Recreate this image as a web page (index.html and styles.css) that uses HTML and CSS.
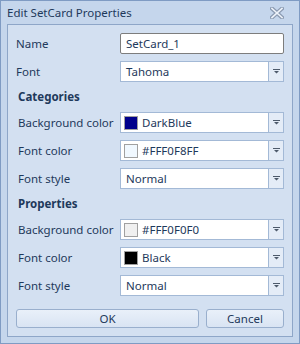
FILE: index.html
```html
<!DOCTYPE html>
<html lang="en">
<head>
    <meta charset="UTF-8">
    <title>Edit SetCard Properties</title>
    <link rel="stylesheet" href="styles.css">
</head>
<body>
    <div class="window">
        <div class="titlebar">
            <span class="title">Edit SetCard Properties</span>
            <svg class="close" width="14" height="12" viewBox="0 0 14 12">
                <path d="M2 1.5 L12 10.5 M12 1.5 L2 10.5" stroke="#8b9bb2" stroke-width="4" stroke-linecap="square"/>
                <path d="M2 1.5 L12 10.5 M12 1.5 L2 10.5" stroke="#eef3fa" stroke-width="1.6" stroke-linecap="square"/>
            </svg>
        </div>
        <div class="panel">
            <div class="row">
                <label>Name</label>
                <div class="edit focused">SetCard_1</div>
            </div>
            <div class="row">
                <label>Font</label>
                <div class="combo">
                    <span class="value">Tahoma</span>
                    <span class="drop"><svg width="7" height="5" viewBox="0 0 7 5"><path d="M0 0h7v1H0z M1 2h5L3.5 4.5z" fill="#4d5a6b"/></svg></span>
                </div>
            </div>

            <div class="heading">Categories</div>
            <div class="row sub">
                <label>Background color</label>
                <div class="combo">
                    <span class="value"><i class="swatch" style="background:#00008b"></i>DarkBlue</span>
                    <span class="drop"><svg width="7" height="5" viewBox="0 0 7 5"><path d="M0 0h7v1H0z M1 2h5L3.5 4.5z" fill="#4d5a6b"/></svg></span>
                </div>
            </div>
            <div class="row sub">
                <label>Font color</label>
                <div class="combo">
                    <span class="value"><i class="swatch" style="background:#f0f8ff"></i>#FFF0F8FF</span>
                    <span class="drop"><svg width="7" height="5" viewBox="0 0 7 5"><path d="M0 0h7v1H0z M1 2h5L3.5 4.5z" fill="#4d5a6b"/></svg></span>
                </div>
            </div>
            <div class="row sub">
                <label>Font style</label>
                <div class="combo">
                    <span class="value">Normal</span>
                    <span class="drop"><svg width="7" height="5" viewBox="0 0 7 5"><path d="M0 0h7v1H0z M1 2h5L3.5 4.5z" fill="#4d5a6b"/></svg></span>
                </div>
            </div>

            <div class="heading">Properties</div>
            <div class="row sub">
                <label>Background color</label>
                <div class="combo">
                    <span class="value"><i class="swatch" style="background:#f0f0f0"></i>#FFF0F0F0</span>
                    <span class="drop"><svg width="7" height="5" viewBox="0 0 7 5"><path d="M0 0h7v1H0z M1 2h5L3.5 4.5z" fill="#4d5a6b"/></svg></span>
                </div>
            </div>
            <div class="row sub">
                <label>Font color</label>
                <div class="combo">
                    <span class="value"><i class="swatch" style="background:#000000"></i>Black</span>
                    <span class="drop"><svg width="7" height="5" viewBox="0 0 7 5"><path d="M0 0h7v1H0z M1 2h5L3.5 4.5z" fill="#4d5a6b"/></svg></span>
                </div>
            </div>
            <div class="row sub">
                <label>Font style</label>
                <div class="combo">
                    <span class="value">Normal</span>
                    <span class="drop"><svg width="7" height="5" viewBox="0 0 7 5"><path d="M0 0h7v1H0z M1 2h5L3.5 4.5z" fill="#4d5a6b"/></svg></span>
                </div>
            </div>

            <div class="buttons">
                <button class="btn ok">OK</button>
                <button class="btn cancel">Cancel</button>
            </div>
        </div>
    </div>
</body>
</html>
```

FILE: styles.css
```css
body {
    margin: 0;
    font-family: 'Noto Sans', 'Open Sans', sans-serif;
    font-size: 11.5px;
    color: #1e395b;
}
.window {
    width: 300px;
    height: 344px;
    box-sizing: border-box;
    border: 1px solid #7f9bc3;
    background-color: #c5d6ec;
    display: flex;
    flex-direction: column;
}
.titlebar {
    height: 23px;
    display: flex;
    align-items: center;
    justify-content: space-between;
    padding: 0 15px 0 6px;
}
.title {
    font-size: 11.5px;
    color: #1e395b;
}
.close {
    display: block;
    margin-top: 1px;
}
.panel {
    margin: 0 6px 0 6px;
    height: 313px;
    box-sizing: border-box;
    border: 1px solid #8ea6c8;
    background-color: #d3e0f1;
    padding: 8px 8px 8px 8px;
    display: flex;
    flex-direction: column;
    gap: 7px;
}
.row {
    display: grid;
    grid-template-columns: 104px 1fr;
    align-items: center;
    height: 21px;
}
.row.sub label {
    padding-left: 2px;
}
.heading {
    height: 16px;
    line-height: 16px;
    font-weight: bold;
    padding-left: 2px;
}
.edit, .combo {
    height: 21px;
    box-sizing: border-box;
    background-color: #ffffff;
    border: 1px solid #a3b9d6;
    display: flex;
    align-items: center;
}
.edit {
    padding-left: 5px;
}
.edit.focused {
    border-color: #7d7d7d;
    border-radius: 2px;
}
.combo .value {
    flex: 1;
    display: flex;
    align-items: center;
    padding-left: 5px;
}
.swatch {
    width: 12px;
    height: 12px;
    border: 1px solid #a0a0a0;
    margin: 0 4px 0 -2px;
}
.drop {
    width: 15px;
    height: 100%;
    box-sizing: border-box;
    border-left: 1px solid #a3b9d6;
    background-color: #e4ecf7;
    display: flex;
    align-items: center;
    justify-content: center;
}
.drop svg {
    display: block;
}
.buttons {
    margin-top: auto;
    display: grid;
    grid-template-columns: 1fr 78px;
    gap: 7px;
}
.btn {
    height: 19px;
    font-family: inherit;
    font-size: 11.5px;
    color: #1e395b;
    border: 1px solid #99afcd;
    border-radius: 3px;
    background: linear-gradient(#e9f0f9, #d9e4f3);
    padding: 0;
}
```
